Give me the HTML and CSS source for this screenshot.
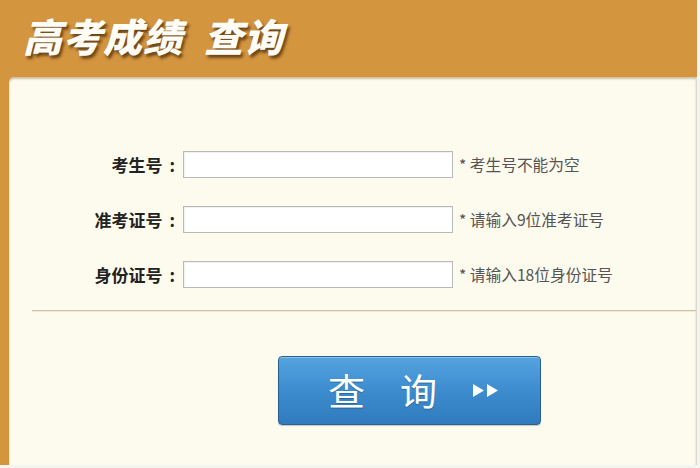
FILE: index.html
```html
<!DOCTYPE html>
<html lang="zh-CN">
<head>
<meta charset="utf-8">
<title>高考成绩查询</title>
<link rel="stylesheet" href="styles.css">
</head>
<body>
<div class="page">
  <header class="header">
    <h1 class="title"><span class="title-a">高考成绩</span><span class="title-b">查询</span></h1>
  </header>
  <main class="panel">
    <form class="form">
      <div class="row">
        <label class="label">考生号<span class="colon">:</span></label>
        <input class="field" type="text">
        <span class="hint">* 考生号不能为空</span>
      </div>
      <div class="row">
        <label class="label">准考证号<span class="colon">:</span></label>
        <input class="field" type="text">
        <span class="hint">* 请输入9位准考证号</span>
      </div>
      <div class="row">
        <label class="label">身份证号<span class="colon">:</span></label>
        <input class="field" type="text">
        <span class="hint">* 请输入18位身份证号</span>
      </div>
    </form>
    <hr class="divider">
    <div class="actions">
      <button class="btn" type="button">
        <span class="btn-ch">查</span>
        <span class="btn-ch">询</span>
        <svg class="btn-arrows" width="28" height="15" viewBox="0 0 28 15">
          <polygon points="1,1 12,7.5 1,14" fill="#fff"/>
          <polygon points="15,1 26,7.5 15,14" fill="#fff"/>
        </svg>
      </button>
    </div>
  </main>
</div>
</body>
</html>
```
FILE: styles.css
```css
html, body {
  margin: 0;
  padding: 0;
  background: #f4f4f0;
}
body {
  width: 700px;
  height: 468px;
  overflow: hidden;
  font-family: "Noto Sans CJK SC", "Noto Sans", sans-serif;
}
.page {
  width: 697px;
  height: 465px;
  background: #d4953f;
  display: flex;
  flex-direction: column;
}
.header {
  height: 77px;
  flex: none;
  padding-left: 23px;
  box-sizing: border-box;
}
.title {
  margin: 0;
  padding-top: 9px;
  font-size: 39px;
  line-height: 52px;
  font-weight: 900;
  font-style: italic;
  color: #fffdf6;
  letter-spacing: 1px;
  text-shadow: 2px 3px 3px rgba(70, 40, 10, 0.75);
  display: flex;
}
.title-b {
  margin-left: 21px;
}
.panel {
  flex: 1;
  margin-left: 9px;
  background: #fdfaee;
  border-top-left-radius: 5px;
  border-right: 1px solid #d9d6cc;
  box-shadow: inset 0 2px 2px rgba(120, 90, 40, 0.35);
  display: flex;
  flex-direction: column;
}
.form {
  padding-top: 74px;
  display: flex;
  flex-direction: column;
  gap: 28px;
}
.row {
  display: flex;
  align-items: center;
  height: 27px;
}
.label {
  width: 166px;
  text-align: right;
  font-size: 17px;
  font-weight: 700;
  color: #222;
  margin-right: 8px;
}
.colon {
  margin-left: 7px;
}
.field {
  width: 270px;
  height: 27px;
  box-sizing: border-box;
  border: 1px solid #b9b9b9;
  background: #fff;
  margin: 0 6px 0 0;
  padding: 0 4px;
  box-shadow: inset 1px 1px 1px rgba(0, 0, 0, 0.06);
}
.hint {
  font-size: 15.7px;
  color: #555;
  white-space: nowrap;
}
.divider {
  margin: 22px 0 0 23px;
  border: 0;
  height: 1px;
  background: #c9c1a6;
  box-shadow: 0 1px 0 #efe9d6;
}
.actions {
  padding-top: 45px;
  padding-left: 269px;
}
.btn {
  width: 263px;
  height: 69px;
  box-sizing: border-box;
  border: 1px solid #2b5f8c;
  border-radius: 4px;
  background: linear-gradient(#55a3de, #3d8ccf 50%, #2f7bbd);
  box-shadow: inset 0 1px 0 rgba(255, 255, 255, 0.35), 0 1px 1px rgba(0, 0, 0, 0.2);
  display: flex;
  align-items: center;
  padding: 0 0 0 49px;
  cursor: pointer;
}
.btn-ch {
  font-family: "Noto Sans CJK SC", sans-serif;
  font-size: 37px;
  font-weight: 400;
  color: #fff;
  line-height: 1;
  margin-right: 35px;
  text-shadow: 0 1px 1px rgba(0, 0, 0, 0.25);
}
```
